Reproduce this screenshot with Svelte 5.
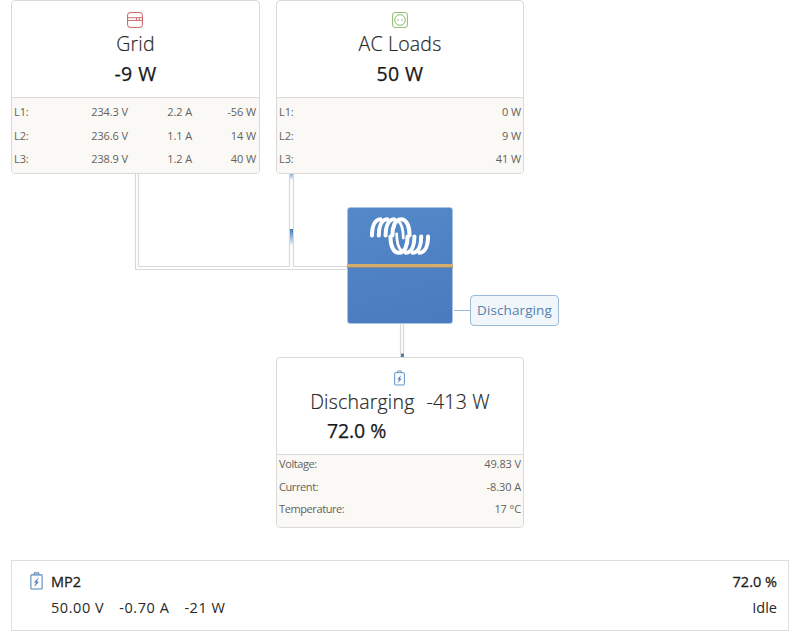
<script lang="ts">
  interface Phase {
    name: string;
    voltage?: string;
    current?: string;
    power: string;
  }

  const gridPhases: Phase[] = [
    { name: 'L1:', voltage: '234.3 V', current: '2.2 A', power: '-56 W' },
    { name: 'L2:', voltage: '236.6 V', current: '1.1 A', power: '14 W' },
    { name: 'L3:', voltage: '238.9 V', current: '1.2 A', power: '40 W' }
  ];

  const loadPhases: Phase[] = [
    { name: 'L1:', power: '0 W' },
    { name: 'L2:', power: '9 W' },
    { name: 'L3:', power: '41 W' }
  ];

  const batteryDetails = [
    { label: 'Voltage:', value: '49.83 V' },
    { label: 'Current:', value: '-8.30 A' },
    { label: 'Temperature:', value: '17 °C' }
  ];
</script>

{#snippet batteryIcon()}
  <svg class="battery-icon" viewBox="0 0 12 17" fill="none" stroke="#5585b8">
    <path d="M1.5 2.7h9q.8 0 .8.8v11.8q0 .8-.8.8h-9q-.8 0-.8-.8V3.5q0-.8.8-.8z" />
    <path d="M3.8 2.5V1.6q0-.8.8-.8h2.8q.8 0 .8.8v.9" />
    <path d="M8.2 5 3.5 9.9l2 .1-1.7 4.2 4.7-5-2.2-.1z" fill="#5585b8" stroke="none" />
  </svg>
{/snippet}

<main>
  <section class="diagram">
    <svg class="wires" width="800" height="358" fill="none">
      <g stroke="#dad9d5">
        <path d="M135.5 174V269.5H347" />
        <path d="M138.5 174V266.5H289.5V174M293.5 174V266.5H347" />
        <path d="M400.5 324V357M403.5 324V357" />
      </g>
      <defs>
        <linearGradient id="pulse" x1="0" y1="0" x2="0" y2="1">
          <stop offset="0" stop-color="#3d75b5" />
          <stop offset="1" stop-color="#3d75b5" stop-opacity="0" />
        </linearGradient>
      </defs>
      <rect x="290" y="229" width="3" height="17" fill="url(#pulse)" />
      <rect x="290" y="174" width="3" height="6" fill="url(#pulse)" opacity=".6" />
      <rect x="401" y="353.5" width="3" height="4" fill="#4c7fb9" />
    </svg>

    <div class="card">
      <div class="head">
        <svg class="icon" viewBox="0 0 16 16" fill="none" stroke="#c4625e">
          <rect x=".6" y=".6" width="14.8" height="14.8" rx="2.5" />
          <path d="M.6 5.7h14.8M.6 8.5h14.8M9.5 5.7v2.5M12.3 5.7v2.5" stroke-width=".9" />
        </svg>
        <h2>Grid</h2>
        <strong>-9 W</strong>
      </div>
      <div class="details">
        {#each gridPhases as phase}
          <div class="row phases">
            <span>{phase.name}</span>
            <span>{phase.voltage}</span>
            <span>{phase.current}</span>
            <span>{phase.power}</span>
          </div>
        {/each}
      </div>
    </div>

    <div class="card">
      <div class="head">
        <svg class="icon" viewBox="0 0 16 16" fill="none" stroke="#8dbb6e">
          <rect x=".6" y=".6" width="14.8" height="14.8" rx="2" />
          <circle cx="8" cy="8" r="5.3" />
          <circle cx="6.1" cy="8" r=".8" fill="#8dbb6e" stroke="none" />
          <circle cx="9.9" cy="8" r=".8" fill="#8dbb6e" stroke="none" />
        </svg>
        <h2>AC Loads</h2>
        <strong>50 W</strong>
      </div>
      <div class="details">
        {#each loadPhases as phase}
          <div class="row">
            <span>{phase.name}</span>
            <span>{phase.power}</span>
          </div>
        {/each}
      </div>
    </div>

    <div class="inverter">
      <div class="logo">
        <svg width="60" height="38" viewBox="0 0 60 38" fill="none" stroke="#fff" stroke-width="4.1" stroke-linecap="round">
          <path d="M2 18.5C2 10 4.5 2.5 10.5 2.2" />
          <path d="M8.8 18.5C8.8 10 11.3 2.5 17.3 2.2" />
          <path d="M15.6 18.5C15.6 10 18.1 2.5 24.1 2.2" />
          <path d="M22.4 18.5C22.4 10 25 2.2 31 2.2C36.5 2.2 39.5 9 39.5 18.5" />
          <path d="M20.5 19.5C20.5 29 23.5 35.8 29 35.8C35 35.8 37.6 28 37.6 19.5" />
          <path d="M28.5 4C32.5 8 33.3 13 33.3 21" stroke-width="2.8" />
          <path d="M26.7 17C26.7 25 27.5 30 31.5 34" stroke-width="2.8" />
          <path d="M44.4 19.5C44.4 28 41.9 35.5 35.9 35.8" />
          <path d="M51.2 19.5C51.2 28 48.7 35.5 42.7 35.8" />
          <path d="M58 19.5C58 28 55.5 35.5 49.5 35.8" />
        </svg>
      </div>
      <div class="stripe"></div>
      <div class="status">Discharging</div>
    </div>

    <div class="card battery">
      <div class="head">
        {@render batteryIcon()}
        <h2><span>Discharging</span><span>-413 W</span></h2>
        <strong>72.0 %</strong>
      </div>
      <div class="details">
        {#each batteryDetails as detail}
          <div class="row">
            <span class="label">{detail.label}</span>
            <span>{detail.value}</span>
          </div>
        {/each}
      </div>
    </div>
  </section>

  <section class="bank">
    {@render batteryIcon()}
    <div class="info">
      <b>MP2</b>
      <div class="readings">
        <span>50.00 V</span>
        <span>-0.70 A</span>
        <span>-21 W</span>
      </div>
    </div>
    <div class="state">
      <b>72.0 %</b>
      <div>Idle</div>
    </div>
  </section>
</main>

<style>
  :global(body) {
    background: #fff;
  }

  main {
    height: 640px;
    overflow: hidden;
    padding: 0 11px;
    box-sizing: border-box;
    font-family: 'Open Sans', 'Noto Sans', sans-serif;
    color: #292826;
  }

  .diagram {
    position: relative;
    display: grid;
    grid-template-columns: 249px 248px;
    grid-template-rows: 174px 117px 171px;
    column-gap: 16px;
    row-gap: 33px;
  }

  .wires {
    position: absolute;
    left: -11px;
    top: 0;
  }

  .wires g {
    stroke-width: 1.2;
  }

  .card {
    position: relative;
    display: flex;
    flex-direction: column;
    box-sizing: border-box;
    border: 1px solid #d9d9d6;
    border-radius: 4px;
    background: #fff;
    overflow: hidden;
  }

  .head {
    display: flex;
    flex-direction: column;
    align-items: center;
    height: 97px;
    box-sizing: border-box;
    padding-top: 11px;
    border-bottom: 1px solid #d9d9d6;
  }

  .icon {
    width: 16px;
    height: 16px;
    margin-right: 1px;
  }

  h2 {
    margin: 2px 0 0;
    font-size: 19.5px;
    line-height: 28px;
    font-weight: 300;
    letter-spacing: 0.2px;
    -webkit-text-stroke: 0.2px #292826;
  }

  strong {
    margin-top: 2px;
    font-size: 19.5px;
    line-height: 28px;
    font-weight: 500;
    letter-spacing: 0.4px;
    color: #191817;
    -webkit-text-stroke: 0.25px #191817;
  }

  .details {
    flex: 1;
    padding: 2px 2px 0;
    background: #faf9f5;
    font-size: 11px;
    color: #63625e;
  }

  .row {
    display: flex;
    justify-content: space-between;
    line-height: 23.6px;
    letter-spacing: -0.1px;
  }

  .phases {
    display: grid;
    grid-template-columns: 50px 64px 64px 1fr;
    padding-right: 1px;
  }

  .phases span:not(:first-child) {
    text-align: right;
  }

  .inverter {
    position: relative;
    grid-column: 2;
    justify-self: center;
    width: 106px;
    box-sizing: border-box;
    border: 1px solid #a9c5e4;
    border-radius: 3px;
    background: linear-gradient(165deg, #5389c9, #4a7abf);
  }

  .logo {
    height: 56px;
    display: flex;
    justify-content: center;
    align-items: center;
  }

  .stripe {
    height: 3px;
    margin: 0 -1px;
    background: #d4ac6c;
    border-bottom: 1px solid #8b8b83;
  }

  .status {
    position: absolute;
    left: 122px;
    top: 87px;
    width: 89px;
    height: 31px;
    box-sizing: border-box;
    border: 1px solid #9db9d8;
    border-radius: 4px;
    background: #f1f6fb;
    color: #5580ad;
    font-size: 13.5px;
    letter-spacing: 0.1px;
    line-height: 29px;
    text-align: center;
  }

  .status::before {
    content: '';
    position: absolute;
    left: -17px;
    top: 14px;
    width: 16px;
    border-top: 1px solid #9db9d8;
  }

  .battery {
    grid-column: 2;
  }

  .battery-icon {
    width: 11px;
    height: 16px;
  }

  .battery .head {
    padding-top: 12px;
  }

  .battery .battery-icon {
    margin-right: 1px;
  }

  .battery h2 {
    display: flex;
    gap: 12px;
  }

  .battery strong {
    align-self: flex-start;
    margin: 1px 0 0 50px;
    letter-spacing: -0.1px;
  }

  .battery .details {
    padding-top: 0;
  }

  .battery .row {
    line-height: 22.6px;
    position: relative;
    top: -2px;
  }

  .battery .label {
    letter-spacing: -0.4px;
  }

  .bank {
    display: flex;
    box-sizing: border-box;
    height: 71px;
    margin-top: 32px;
    padding: 8px 11px 0 19px;
    border: 1px solid #dededc;
    font-size: 14.5px;
    line-height: 26px;
  }

  .bank .battery-icon {
    width: 13px;
    height: 18px;
    margin: 3px 8px 0 -1px;
  }

  .bank b {
    display: block;
    font-weight: 500;
    color: #1f1e1d;
    -webkit-text-stroke: 0.3px #1f1e1d;
  }

  .readings {
    display: flex;
    gap: 15px;
    letter-spacing: 0.55px;
  }

  .info {
    flex: 1;
  }

  .state {
    text-align: right;
  }
</style>
